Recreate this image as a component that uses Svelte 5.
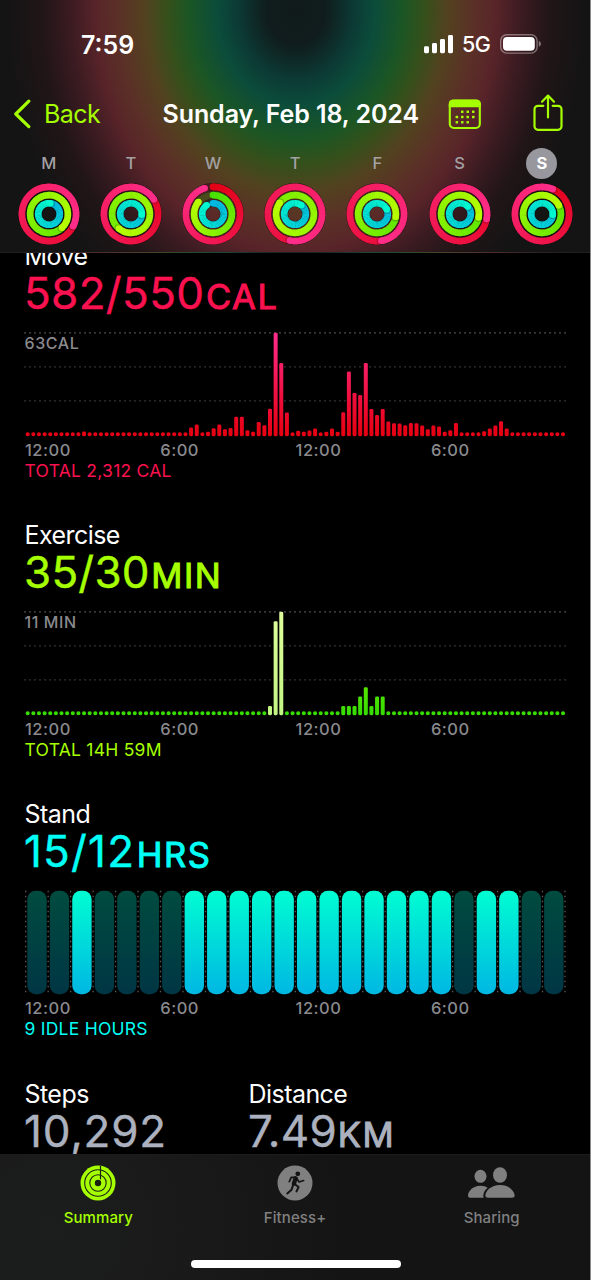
<script lang="ts">
	interface Day {
		letter: string
		rings: number[]
		selected?: boolean
	}

	const days: Day[] = [
		{ letter: 'M', rings: [1.325, 1.38, 1.02] },
		{ letter: 'T', rings: [1.16, 1.61, 1.26] },
		{ letter: 'W', rings: [0.95, 0.86, 0.9] },
		{ letter: 'T', rings: [1.53, 1.85, 1.1] },
		{ letter: 'F', rings: [1.475, 1.275, 1.18] },
		{ letter: 'S', rings: [1.28, 1.28, 1.13] },
		{ letter: 'S', rings: [1.065, 1.175, 1.26], selected: true }
	]

	const ringStyles = [
		{ r: 27.1, from: [226, 0, 20], to: [255, 45, 138], track: '#4a1722' },
		{ r: 18.9, from: [70, 225, 0], to: [184, 255, 0], track: '#4a4a1c' },
		{ r: 10.8, from: [0, 181, 226], to: [0, 250, 208], track: '#143a3c' }
	]

	const hours = ['12:00', '6:00', '12:00', '6:00']

	// One value per 15 minutes, in chart units (103.5 is the top line)
	const move: number[] = Array(96).fill(4)
	move[10] = 4.7
	const moveFromSeven = [
		8.7, 11.7, 4, 4.4, 8, 11.7, 7, 8.3, 19.5, 19.5, 6, 4.4, 14.3, 11, 27.5, 103.5, 73.3, 23.7, 4, 5.5,
		4.4, 5.7, 7.7, 4, 4.5, 7.7, 4.5, 24, 64.7, 43.3, 41.3, 73.3, 27.3, 21.3, 27.3, 14.7, 13, 12.7, 11,
		13.3, 13, 10.7, 7, 10.7, 9.7, 4.5, 6, 13.3, 4, 4, 4, 4, 5, 7.7, 10.7, 15, 7.7
	]
	moveFromSeven.forEach((v, i) => (move[29 + i] = v))

	const exercise: number[] = Array(96).fill(4)
	const exerciseBars = { 43: 9.3, 44: 94, 45: 103.5, 56: 9.3, 57: 9.3, 58: 9.3, 59: 18.7, 60: 28, 61: 9.3, 62: 18.7, 63: 18.7 }
	for (const [i, v] of Object.entries(exerciseBars)) exercise[+i] = v

	const stood = [2, 7, 8, 9, 10, 11, 12, 13, 14, 15, 16, 17, 18, 20, 21]

	const calendarDots = [
		[13, 11.4], [18.5, 11.4], [24, 11.4],
		[7.6, 16.7], [13, 16.7], [18.5, 16.7], [24, 16.7],
		[7.6, 22.1], [13, 22.1], [18.5, 22.1]
	]

	function point(r: number, turn: number) {
		const a = turn * Math.PI * 2
		return { x: 31 + r * Math.sin(a), y: 31 - r * Math.cos(a) }
	}

	// SVG has no conic gradient, so a ring is cut into short coloured arcs
	function segments(r: number, progress: number, from: number[], to: number[]) {
		const start = Math.max(0, progress - 1)
		const count = 48
		const step = (progress - start) / count
		return Array.from({ length: count }, (_, i) => {
			const t0 = start + i * step
			const a = point(r, t0 - (i ? 0.004 : 0))
			const b = point(r, t0 + step)
			const mix = (t0 + step) / progress
			const rgb = from.map((c, k) => Math.round(c + (to[k] - c) * mix))
			return { d: `M${a.x} ${a.y}A${r} ${r} 0 0 1 ${b.x} ${b.y}`, color: `rgb(${rgb})` }
		})
	}
</script>

{#snippet rings(values: number[])}
	<svg class="rings" viewBox="0 0 62 62" width="62" height="62">
		{#each ringStyles as style, i}
			{@const end = point(style.r, values[i])}
			{@const shade = point(style.r, values[i] + 0.2 / style.r)}
			{@const arcs = segments(style.r, values[i], style.from, style.to)}
			{@const first = point(style.r, 0)}
			<circle cx="31" cy="31" r={style.r} fill="none" stroke="#120c0c" stroke-opacity=".6" stroke-width="7.6" />
			<circle cx="31" cy="31" r={style.r} fill="none" stroke={style.track} stroke-width="6.6" />
			{#if values[i] < 1}
				<circle cx={first.x} cy={first.y} r="3.3" fill={arcs[0].color} />
			{/if}
			{#each arcs as arc}
				<path d={arc.d} fill="none" stroke={arc.color} stroke-width="6.6" />
			{/each}
			{#if values[i] > 1}
				<circle cx={shade.x} cy={shade.y} r="3.3" fill="#000" fill-opacity=".22" />
			{/if}
			<circle cx={end.x} cy={end.y} r="3.3" fill={arcs[47].color} />
		{/each}
	</svg>
{/snippet}

{#snippet barChart(values: number[], kind: string, label: string)}
	<div class="chart">
		<svg viewBox="0 0 543 105" width="543" height="105">
			<defs>
				<linearGradient id="move" gradientUnits="userSpaceOnUse" x1="0" y1="0" x2="0" y2="104">
					<stop offset="0" stop-color="#ff2d8e" />
					<stop offset=".7" stop-color="#ee0c34" />
					<stop offset="1" stop-color="#e60010" />
				</linearGradient>
				<linearGradient id="exercise" gradientUnits="userSpaceOnUse" x1="0" y1="0" x2="0" y2="104">
					<stop offset="0" stop-color="#a6ff00" />
					<stop offset="1" stop-color="#36dc00" />
				</linearGradient>
				<linearGradient id="workout" gradientUnits="userSpaceOnUse" x1="0" y1="0" x2="0" y2="104">
					<stop offset="0" stop-color="#dfff9c" />
					<stop offset="1" stop-color="#c2f584" />
				</linearGradient>
			</defs>
			{#each [0.9, 34.9, 68.9] as y, i}
				<line x1="0" x2="543" y1={y} y2={y} stroke={i ? '#323234' : '#4c4c4f'} stroke-width="1.3" stroke-dasharray="2 3" />
			{/each}
			{#each values as v, i}
				<rect
					x={1.7 + i * 5.635}
					y={104.2 - v}
					width="4"
					height={v}
					rx={v > 4 ? 1.4 : 1.9}
					fill="url(#{kind === 'exercise' && i > 42 && i < 46 ? 'workout' : kind})"
				/>
			{/each}
		</svg>
		<span class="peak">{label}</span>
	</div>
{/snippet}

{#snippet axis()}
	<div class="axis">
		{#each hours as hour}<span>{hour}</span>{/each}
	</div>
{/snippet}

<div class="phone">
	<header>
		<div class="status">
			<span class="clock">7:59</span>
			<div class="signals">
				<svg width="30" height="19" viewBox="0 0 30 19" fill="#fff">
					<rect x="0" y="11.3" width="5" height="6.9" rx="1.4" />
					<rect x="8" y="8" width="5" height="10.2" rx="1.4" />
					<rect x="16" y="4" width="5" height="14.2" rx="1.4" />
					<rect x="24" y="0" width="5" height="18.2" rx="1.4" />
				</svg>
				<span class="network">5G</span>
				<svg width="42" height="20" viewBox="0 0 42 20">
					<rect x=".7" y=".7" width="36.4" height="18.4" rx="6" fill="none" stroke="#fff" stroke-opacity=".38" stroke-width="1.4" />
					<rect x="3" y="3" width="31.8" height="13.8" rx="4" fill="#fff" />
					<path d="M38.8 7v5.6c2.8-.8 2.8-4.8 0-5.6z" fill="#fff" fill-opacity=".42" />
				</svg>
			</div>
		</div>

		<nav>
			<svg class="chevron" width="18" height="30" viewBox="0 0 18 30">
				<path d="M15.8 2.2 2.8 15l13 12.6" fill="none" stroke="#a6ff00" stroke-width="3.2" stroke-linecap="round" stroke-linejoin="round" />
			</svg>
			<span class="back">Back</span>
			<h1>Sunday, Feb 18, 2024</h1>
			<svg class="calendar" width="34" height="31" viewBox="0 0 34 31">
				<rect x="1.8" y="1.6" width="30" height="27.4" rx="4" fill="none" stroke="#a6ff00" stroke-width="2.1" />
				<path d="M.8 8.3V4.8a4 4 0 0 1 4-4h24a4 4 0 0 1 4 4v3.5z" fill="#a6ff00" />
				<g fill="#a6ff00">
					{#each calendarDots as [x, y]}
						<rect {x} {y} width="2.5" height="2.5" rx=".5" />
					{/each}
				</g>
			</svg>
			<svg class="share" width="30" height="37" viewBox="0 0 30 37" fill="none" stroke="#a6ff00" stroke-width="2.2" stroke-linecap="round" stroke-linejoin="round">
				<path d="M10.3 11.8H5a3.5 3.5 0 0 0-3.5 3.5v17A3.5 3.5 0 0 0 5 35.8h20a3.5 3.5 0 0 0 3.5-3.5v-17a3.5 3.5 0 0 0-3.5-3.5h-5.3" />
				<path d="M15 23.5V2M9 7.7l6-6.1 6 6.1" />
			</svg>
		</nav>

		<div class="week">
			{#each days as day}
				<div class="day">
					<span class="letter" class:selected={day.selected}>{day.letter}</span>
					{@render rings(day.rings)}
				</div>
			{/each}
		</div>
	</header>

	<main>
		<section class="move">
			<h2>Move</h2>
			<p class="value"><span class="num">582/550</span><span class="unit">CAL</span></p>
			{@render barChart(move, 'move', '63CAL')}
			{@render axis()}
			<p class="total">TOTAL 2,312 CAL</p>
		</section>

		<section class="exercise">
			<h2>Exercise</h2>
			<p class="value"><span class="num">35/30</span><span class="unit">MIN</span></p>
			{@render barChart(exercise, 'exercise', '11 MIN')}
			{@render axis()}
			<p class="total">TOTAL 14H 59M</p>
		</section>

		<section class="stand">
			<h2>Stand</h2>
			<p class="value"><span class="num">15/12</span><span class="unit">HRS</span></p>
			<div class="chart">
				<svg viewBox="0 0 543 105" width="543" height="105">
					<defs>
						<linearGradient id="stood" x1="0" y1="0" x2="0" y2="1">
							<stop offset="0" stop-color="#00fdd2" />
							<stop offset="1" stop-color="#00b7e3" />
						</linearGradient>
						<linearGradient id="idle" x1="0" y1="0" x2="0" y2="1">
							<stop offset="0" stop-color="#004b3f" />
							<stop offset="1" stop-color="#003644" />
						</linearGradient>
					</defs>
					{#each Array(25) as _, i}
						<line x1={1.7 + i * 22.47} x2={1.7 + i * 22.47} y1="0.8" y2="104.2" stroke="#5a5a5d" stroke-width="1.3" stroke-dasharray="1.5 3.5" />
					{/each}
					{#each Array(24) as _, i}
						<rect x={3.3 + i * 22.47} y=".7" width="19.4" height="103.6" rx="8.5" fill="url(#{stood.includes(i) ? 'stood' : 'idle'})" />
					{/each}
				</svg>
			</div>
			{@render axis()}
			<p class="total">9 IDLE HOURS</p>
		</section>

		<div class="totals">
			<div class="steps">
				<h2>Steps</h2>
				<p class="value"><span class="num">10,292</span></p>
			</div>
			<div class="distance">
				<h2>Distance</h2>
				<p class="value"><span class="num">7.49</span><span class="unit">KM</span></p>
			</div>
		</div>
	</main>

	<footer>
		<div class="tabs">
			<div class="tab active">
				<svg width="36" height="36" viewBox="0 0 36 36">
					<circle cx="18" cy="18" r="17.5" fill="#a6ff00" />
					<g fill="none" stroke="#1a1f14" stroke-width="1.1">
						<circle cx="18" cy="18" r="13.3" />
						<circle cx="18" cy="18" r="8.2" />
					</g>
					<circle cx="18" cy="18" r="3.2" fill="#1a1f14" />
					<path d="M20.5.8v13.5" stroke="#1a1f14" stroke-width="1.2" />
				</svg>
				<span>Summary</span>
			</div>
			<div class="tab">
				<svg width="36" height="36" viewBox="0 0 36 36">
					<circle cx="18" cy="18" r="17.5" fill="#808080" />
					<circle cx="20.8" cy="8.8" r="2.4" fill="#141414" />
					<g fill="none" stroke="#141414" stroke-linecap="round" stroke-linejoin="round">
						<path d="M18.6 13.3 16.9 18.6" stroke-width="4.4" />
						<path d="M18.3 12.3h-4.1l-1.9 4.4M19.8 13.4l2.4 3.6 4.4-1.5" stroke-width="1.7" />
						<path d="m17.5 19 4.1 3-2.1 4.4M16 20.4l-1.5 4.3-4.2 3.8" stroke-width="2" />
					</g>
				</svg>
				<span>Fitness+</span>
			</div>
			<div class="tab">
				<svg width="49" height="36" viewBox="0 0 49 36" fill="#808080">
					<ellipse cx="13.5" cy="11.3" rx="6" ry="6.5" />
					<path d="M3.5 32.8C1.8 32.8 1 32 1 30.6c0-4.3 4.8-9.9 12.5-9.9 3 0 5.3.8 7.2 2-2.9 2.2-4.4 5.2-4.4 8 0 .8.2 1.5.5 2.1z" />
					<ellipse cx="33" cy="10" rx="7" ry="7.7" />
					<path d="M21.2 32.8c-1.900 0-2.800-.8-2.800-2.200 0-4.400 5.600-10.500 14.600-10.500s14.600 6.100 14.600 10.500c0 1.400-.9 2.200-2.800 2.200z" />
				</svg>
				<span>Sharing</span>
			</div>
		</div>
		<div class="home"></div>
	</footer>
</div>

<style>
	:global(body) {
		margin: 0;
		background: #000;
	}

	.phone {
		box-sizing: border-box;
		display: flex;
		flex-direction: column;
		width: 591px;
		height: 1280px;
		border-right: 1px solid #8a8a8a;
		overflow: hidden;
		background: #000;
		color: #fff;
		font-family: Inter, 'Liberation Sans', sans-serif;
	}

	h1,
	h2,
	p {
		margin: 0;
		font-weight: 400;
	}

	svg {
		display: block;
		flex: none;
	}

	header {
		box-sizing: border-box;
		flex: none;
		height: 253px;
		border-bottom: 1px solid rgba(60, 60, 60, 0.3);
		background: radial-gradient(
			ellipse 290px 350px at 296px 10px,
			#101a1b 0,
			#101c1d 10%,
			#0c3a34 20%,
			#0b4c3b 27%,
			#1b5624 37%,
			#34501b 44%,
			#52421f 52%,
			#5b3127 61%,
			#582429 69%,
			#3a1b21 78%,
			#201517 88%,
			#141414 100%
		);
	}

	.status {
		display: flex;
		justify-content: space-between;
		height: 88px;
		padding: 0 48px 0 81px;
	}

	.clock {
		margin-top: 30px;
		font-size: 25px;
		font-weight: 600;
		line-height: 30px;
	}

	.signals {
		display: flex;
		align-items: center;
		height: 88px;
	}

	.network {
		width: 38px;
		margin-left: 8px;
		font-size: 21.5px;
		font-weight: 500;
		letter-spacing: -0.6px;
	}

	nav {
		display: flex;
		align-items: center;
		height: 52px;
		padding-left: 13px;
	}

	.back {
		width: 118.5px;
		margin-left: 13px;
		color: #a6ff00;
		font-size: 25px;
		letter-spacing: -0.6px;
	}

	h1 {
		width: 285.5px;
		font-size: 25px;
		font-weight: 600;
		white-space: nowrap;
		letter-spacing: -0.08px;
	}

	.share {
		margin-top: -3px;
		margin-left: 50.5px;
	}

	.week {
		display: flex;
		margin-left: 7.6px;
		padding-top: 8px;
	}

	.day {
		display: flex;
		flex-direction: column;
		align-items: center;
		width: 82.2px;
	}

	.letter {
		width: 31px;
		height: 31px;
		margin-bottom: 4.4px;
		border-radius: 50%;
		color: #a3a1a3;
		font-size: 16.5px;
		font-weight: 500;
		line-height: 31px;
		text-align: center;
	}

	.letter.selected {
		background: #98979d;
		color: #fff;
		font-weight: 700;
	}

	main {
		flex: none;
		height: 901px;
		overflow: hidden;
	}

	section {
		height: 279.4px;
		padding-left: 24px;
	}

	section:first-child {
		margin-top: -13.2px;
	}

	h2 {
		padding: 0.7px 0 0 0.5px;
		font-size: 25px;
		line-height: 31px;
		letter-spacing: -0.55px;
	}

	.value {
		height: 43px;
		line-height: 43px;
		white-space: nowrap;
	}

	.num {
		font-size: 44px;
		letter-spacing: 0.35px;
		-webkit-text-stroke: 0.4px currentColor;
	}

	.unit {
		margin-left: 1.5px;
		font-size: 34.5px;
		letter-spacing: 1.6px;
		-webkit-text-stroke: 1px currentColor;
	}

	.chart {
		position: relative;
		margin-top: 17px;
	}

	.peak {
		position: absolute;
		top: 1px;
		left: 0.5px;
		color: #8a8a8e;
		font-size: 16px;
		font-weight: 500;
		line-height: 20px;
		letter-spacing: 0.6px;
	}

	.axis {
		display: grid;
		grid-template-columns: repeat(4, 135.3px);
		margin: 3px 0 0 1px;
		color: #8a8a8e;
		font-size: 16.5px;
		font-weight: 500;
		line-height: 20px;
		letter-spacing: 0.5px;
	}

	.total {
		padding-left: 0.5px;
		font-size: 17.5px;
		line-height: 21px;
		letter-spacing: 0.25px;
	}

	.move .value,
	.move .total {
		color: #fa114f;
	}

	.exercise .value,
	.exercise .total {
		color: #a6ff00;
	}

	.exercise .num {
		letter-spacing: 0.2px;
	}

	.stand .value,
	.stand .total {
		color: #00fff6;
	}

	.stand .num {
		letter-spacing: 1.2px;
	}

	.totals {
		display: grid;
		grid-template-columns: 224px 1fr;
		padding-left: 24px;
	}

	.totals .value {
		color: #abb1be;
	}

	.steps .num {
		letter-spacing: 0.8px;
	}

	.distance .unit {
		margin-left: 0.5px;
	}

	footer {
		box-sizing: border-box;
		display: flex;
		flex-direction: column;
		align-items: center;
		flex: none;
		height: 126px;
		border-top: 1px solid #1c1c1c;
		background: radial-gradient(circle at 50px 75px, #1c1e1d 0, #191a19 120px, #141414 300px);
	}

	.tabs {
		display: flex;
		width: 100%;
		height: 105px;
	}

	.tab {
		display: flex;
		flex: 1;
		flex-direction: column;
		align-items: center;
		padding-top: 10px;
		color: #808080;
		font-size: 15px;
		font-weight: 500;
		line-height: 18px;
	}

	.tab span {
		margin-top: 8px;
		letter-spacing: 0.1px;
	}

	.tab.active {
		color: #a6ff00;
	}

	.home {
		width: 210px;
		height: 8px;
		margin-left: 2px;
		border-radius: 4px;
		background: #fff;
	}
</style>
